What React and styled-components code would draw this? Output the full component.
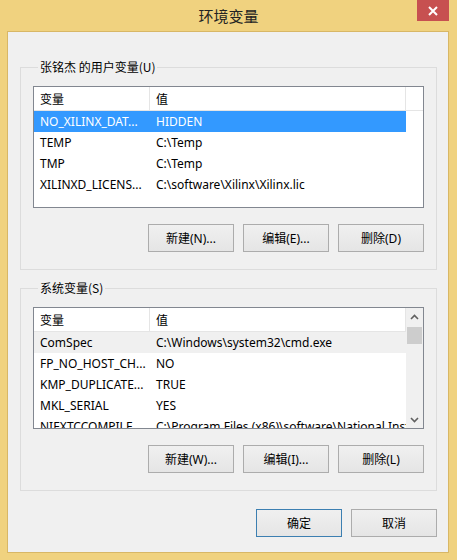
import React from "react";
import styled, { createGlobalStyle } from "styled-components";

const GlobalStyle = createGlobalStyle`
  * { box-sizing: border-box; }
  body {
    margin: 0;
    font-family: "Noto Sans", "Noto Sans CJK SC", sans-serif;
  }
`;

const FONT = `"Noto Sans", "Noto Sans CJK SC", sans-serif`;

const Window = styled.div`
  width: 457px;
  height: 560px;
  background: #f0d27f;
  display: flex;
  flex-direction: column;
  font-family: ${FONT};
  font-size: 12px;
  color: #000;
`;

const TitleBar = styled.div`
  height: 31px;
  display: grid;
  grid-template-columns: 1fr auto 1fr;
  align-items: start;
`;

const Title = styled.div`
  grid-column: 2;
  font-family: "Noto Sans CJK SC", sans-serif;
  font-size: 15px;
  line-height: 32px;
  color: #222;
`;

const CloseButton = styled.div`
  grid-column: 3;
  justify-self: end;
  width: 32px;
  height: 21px;
  margin-right: 8px;
  background: #c75050;
  display: flex;
  align-items: center;
  justify-content: center;
`;

const Client = styled.div`
  flex: 1;
  margin: 0 8px 7px 7px;
  background: #f0f0f0;
  border: 1px solid #d8b766;
  padding: 27px 11px 0 12px;
  display: flex;
  flex-direction: column;
`;

const Group = styled.fieldset`
  margin: 0 0 ${(p) => p.$gap || 0}px 0;
  padding: 11px 12px 17px 12px;
  border: 1px solid #dcdcdc;
  min-width: 0;
`;

const Legend = styled.legend`
  margin-left: 5px;
  padding: 0 2px;
  font-size: 12px;
  line-height: 16px;
  font-family: "Noto Sans CJK SC", sans-serif;
`;

const ListView = styled.div`
  height: 122px;
  border: 1px solid #828790;
  background: #fff;
  display: flex;
  overflow: hidden;
`;

const ListBody = styled.div`
  flex: 1;
  min-width: 0;
  overflow: hidden;
`;

const Row = styled.div`
  display: grid;
  grid-template-columns: 116px 256px;
  width: 372px;
  height: 21px;
  line-height: 21px;
  overflow: hidden;
  background: ${(p) => (p.$selected ? "#3399ff" : p.$hover ? "#f0f0f0" : "transparent")};
  color: ${(p) => (p.$selected ? "#fff" : "#000")};
`;

const HeaderRow = styled.div`
  display: grid;
  grid-template-columns: 116px 256px 1fr;
  height: 24px;
  line-height: 23px;
  border-bottom: 1px solid #e5e5e5;
`;

const HeaderCell = styled.div`
  padding-left: 6px;
  border-right: 1px solid #e5e5e5;
  font-family: "Noto Sans CJK SC", sans-serif;
  &:last-child { border-right: none; }
`;

const Cell = styled.div`
  padding-left: 6px;
  white-space: nowrap;
  overflow: hidden;
`;

const ScrollBar = styled.div`
  width: 17px;
  background: #f0f0f0;
  display: flex;
  flex-direction: column;
  align-items: center;
`;

const Arrow = styled.div`
  height: 17px;
  display: flex;
  align-items: center;
  justify-content: center;
  width: 100%;
`;

const Thumb = styled.div`
  width: 15px;
  height: 17px;
  margin-top: 2px;
  background: #cdcdcd;
`;

const Track = styled.div`
  flex: 1;
`;

const ButtonRow = styled.div`
  display: flex;
  justify-content: flex-end;
  gap: 9px;
  margin-top: ${(p) => p.$top}px;
`;

const Button = styled.button`
  width: 86px;
  height: 28px;
  padding: 0;
  font-family: ${FONT};
  font-size: 12px;
  color: #000;
  border: 1px solid ${(p) => (p.$default ? "#3c7fb1" : "#acacac")};
  background: linear-gradient(#f0f0f0, #e5e5e5);
`;

function Chevron({ up }) {
  return (
    <svg width="9" height="6" viewBox="0 0 9 6">
      <path
        d={up ? "M1 5 L4.5 1.5 L8 5" : "M1 1 L4.5 4.5 L8 1"}
        stroke="#606060"
        strokeWidth="1.6"
        fill="none"
      />
    </svg>
  );
}

const userVars = [
  ["NO_XILINX_DAT...", "HIDDEN"],
  ["TEMP", "C:\\Temp"],
  ["TMP", "C:\\Temp"],
  ["XILINXD_LICENS...", "C:\\software\\Xilinx\\Xilinx.lic"],
];

const sysVars = [
  ["ComSpec", "C:\\Windows\\system32\\cmd.exe"],
  ["FP_NO_HOST_CH...", "NO"],
  ["KMP_DUPLICATE...", "TRUE"],
  ["MKL_SERIAL", "YES"],
  ["NIEXTCCOMPILE...", "C:\\Program Files (x86)\\software\\National Instruments"],
];

function VarList({ rows, scroll, selected, hover }) {
  return (
    <ListView>
      <ListBody>
        <HeaderRow>
          <HeaderCell>变量</HeaderCell>
          <HeaderCell>值</HeaderCell>
          <HeaderCell />
        </HeaderRow>
        {rows.map(([name, value], i) => (
          <Row key={name} $selected={i === selected} $hover={i === hover}>
            <Cell>{name}</Cell>
            <Cell>{value}</Cell>
          </Row>
        ))}
      </ListBody>
      {scroll && (
        <ScrollBar>
          <Arrow>
            <Chevron up />
          </Arrow>
          <Thumb />
          <Track />
          <Arrow>
            <Chevron />
          </Arrow>
        </ScrollBar>
      )}
    </ListView>
  );
}

export default function App() {
  return (
    <>
      <GlobalStyle />
      <Window>
        <TitleBar>
          <Title>环境变量</Title>
          <CloseButton>
            <svg width="10" height="10" viewBox="0 0 10 10">
              <path d="M1 1 L9 9 M9 1 L1 9" stroke="#fff" strokeWidth="2" />
            </svg>
          </CloseButton>
        </TitleBar>
        <Client>
          <Group $gap={10}>
            <Legend>张铭杰 的用户变量(U)</Legend>
            <VarList rows={userVars} selected={0} />
            <ButtonRow $top={16}>
              <Button>新建(N)...</Button>
              <Button>编辑(E)...</Button>
              <Button>删除(D)</Button>
            </ButtonRow>
          </Group>
          <Group>
            <Legend>系统变量(S)</Legend>
            <VarList rows={sysVars} scroll hover={0} />
            <ButtonRow $top={16}>
              <Button>新建(W)...</Button>
              <Button>编辑(I)...</Button>
              <Button>删除(L)</Button>
            </ButtonRow>
          </Group>
          <ButtonRow $top={18}>
            <Button $default>确定</Button>
            <Button>取消</Button>
          </ButtonRow>
        </Client>
      </Window>
    </>
  );
}
